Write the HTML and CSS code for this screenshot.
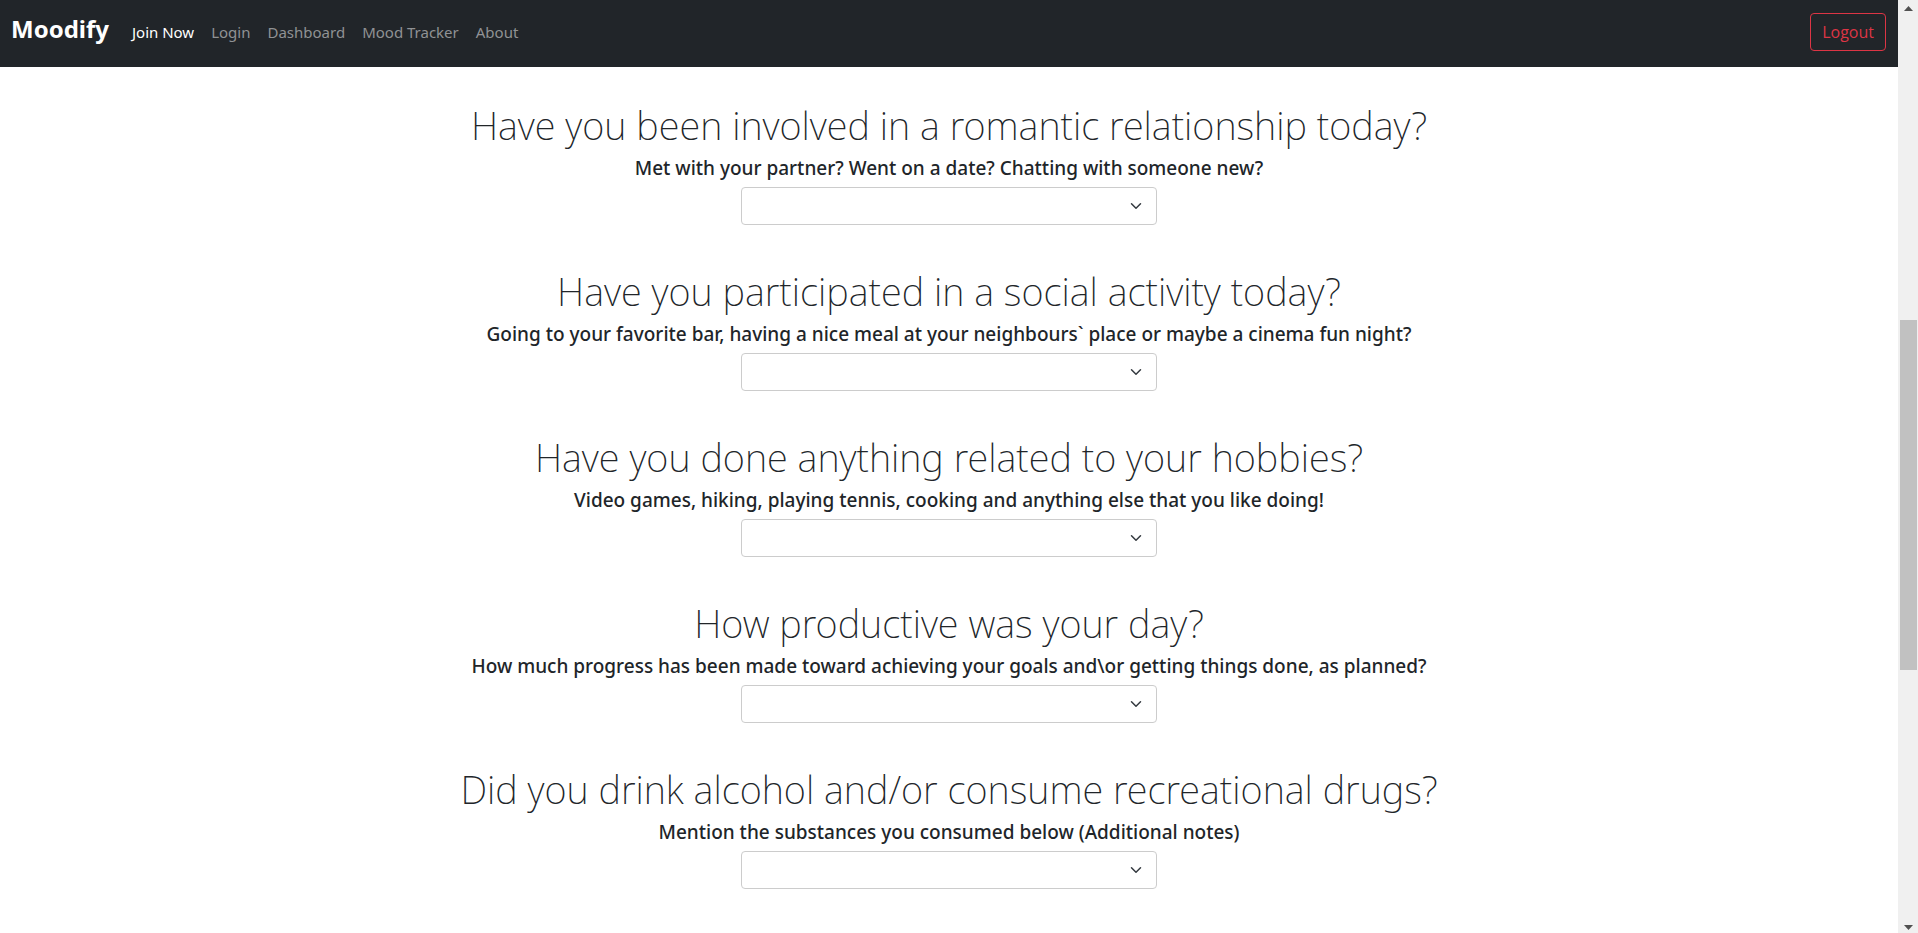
FILE: index.html
```html
<!DOCTYPE html>
<html lang="en">
<head>
<meta charset="utf-8">
<meta name="viewport" content="width=device-width, initial-scale=1">
<title>Moodify</title>
<link rel="stylesheet" href="styles.css">
</head>
<body>
<div class="page">
  <header class="navbar">
    <a class="brand" href="#">Moodify</a>
    <nav class="links">
      <a class="active" href="#">Join Now</a>
      <a href="#">Login</a>
      <a href="#">Dashboard</a>
      <a href="#">Mood Tracker</a>
      <a href="#">About</a>
    </nav>
    <button class="logout" type="button">Logout</button>
  </header>
  <main class="questions">
    <section class="question">
      <h1><label for="romance">Have you been involved in a romantic relationship today?</label></h1>
      <h5>Met with your partner? Went on a date? Chatting with someone new?</h5>
      <div class="field"><select id="romance"></select><svg class="chevron" viewBox="0 0 16 16" aria-hidden="true"><path d="m2 5 6 6 6-6"/></svg></div>
    </section>
    <section class="question">
      <h1><label for="social">Have you participated in a social activity today?</label></h1>
      <h5>Going to your favorite bar, having a nice meal at your neighbours` place or maybe a cinema fun night?</h5>
      <div class="field"><select id="social"></select><svg class="chevron" viewBox="0 0 16 16" aria-hidden="true"><path d="m2 5 6 6 6-6"/></svg></div>
    </section>
    <section class="question">
      <h1><label for="hobbies">Have you done anything related to your hobbies?</label></h1>
      <h5>Video games, hiking, playing tennis, cooking and anything else that you like doing!</h5>
      <div class="field"><select id="hobbies"></select><svg class="chevron" viewBox="0 0 16 16" aria-hidden="true"><path d="m2 5 6 6 6-6"/></svg></div>
    </section>
    <section class="question">
      <h1><label for="productive">How productive was your day?</label></h1>
      <h5>How much progress has been made toward achieving your goals and\or getting things done, as planned?</h5>
      <div class="field"><select id="productive"></select><svg class="chevron" viewBox="0 0 16 16" aria-hidden="true"><path d="m2 5 6 6 6-6"/></svg></div>
    </section>
    <section class="question">
      <h1><label for="substances">Did you drink alcohol and/or consume recreational drugs?</label></h1>
      <h5>Mention the substances you consumed below (Additional notes)</h5>
      <div class="field"><select id="substances"></select><svg class="chevron" viewBox="0 0 16 16" aria-hidden="true"><path d="m2 5 6 6 6-6"/></svg></div>
    </section>
  </main>
</div>
<div class="scrollbar" aria-hidden="true">
  <svg class="arrow" viewBox="0 0 9 5"><path d="M0 5 4.500 0 9 5z"/></svg>
  <div class="track"><div class="thumb"></div></div>
  <svg class="arrow" viewBox="0 0 9 5"><path d="M0 0 4.500 5 9 0z"/></svg>
</div>
</body>
</html>
```
FILE: styles.css
```css
* {
  box-sizing: border-box;
}

body {
  margin: 0;
  min-height: 100vh;
  display: flex;
  background: #fff;
  color: #212529;
  font: 16px/24px "Noto Sans", "Open Sans", sans-serif;
}

.page {
  flex: 1;
  min-width: 0;
}

.navbar {
  display: flex;
  align-items: flex-start;
  padding: 13px 12px 16px 11px;
  background: #212529;
}

.navbar a {
  text-decoration: none;
}

.brand {
  margin-right: 23px;
  color: #fff;
  font-size: 24px;
  font-weight: 700;
  line-height: 32px;
}

.links {
  flex: 1;
  display: flex;
  gap: 17px;
  padding-top: 7px;
  font-size: 15px;
}

.links a {
  color: #909294;
}

.links .active {
  color: #fff;
}

.logout {
  height: 38px;
  padding: 0 11px;
  border: 1px solid #dc3545;
  border-radius: 4px;
  background: transparent;
  color: #dc3545;
  font: 16px/24px "Open Sans", "Noto Sans", sans-serif;
}

.questions {
  display: grid;
  gap: 42px;
  padding: 34px 12px 40px;
  text-align: center;
}

.question h1 {
  margin: 0 0 7px;
  font-size: 38px;
  font-weight: 200;
  line-height: 48px;
}

.question h5 {
  margin: 0 0 7px;
  font-size: 19px;
  font-weight: 500;
  line-height: 24px;
}

.field {
  display: grid;
  align-items: center;
  width: 100%;
  max-width: 416px;
  margin: 0 auto;
}

.field select {
  grid-area: 1 / 1;
  width: 100%;
  height: 38px;
  padding: 0 36px 0 12px;
  border: 1px solid #ccc;
  border-radius: 4px;
  background: #fff;
  color: #212529;
  font: inherit;
  appearance: none;
}

.chevron {
  grid-area: 1 / 1;
  justify-self: end;
  width: 16px;
  height: 12px;
  margin-right: 13px;
  fill: none;
  stroke: #343a40;
  stroke-width: 2;
  stroke-linecap: round;
  stroke-linejoin: round;
  pointer-events: none;
}

.scrollbar {
  flex: 0 0 20px;
  display: flex;
  flex-direction: column;
  align-items: center;
  padding: 6px 0 3px;
  background: #f0f0f0;
}

.arrow {
  width: 9px;
  height: 5px;
  fill: #505050;
}

.track {
  flex: 1;
  width: 17px;
}

.thumb {
  height: 350px;
  margin-top: 309px;
  background: #c1c1c1;
}
```
